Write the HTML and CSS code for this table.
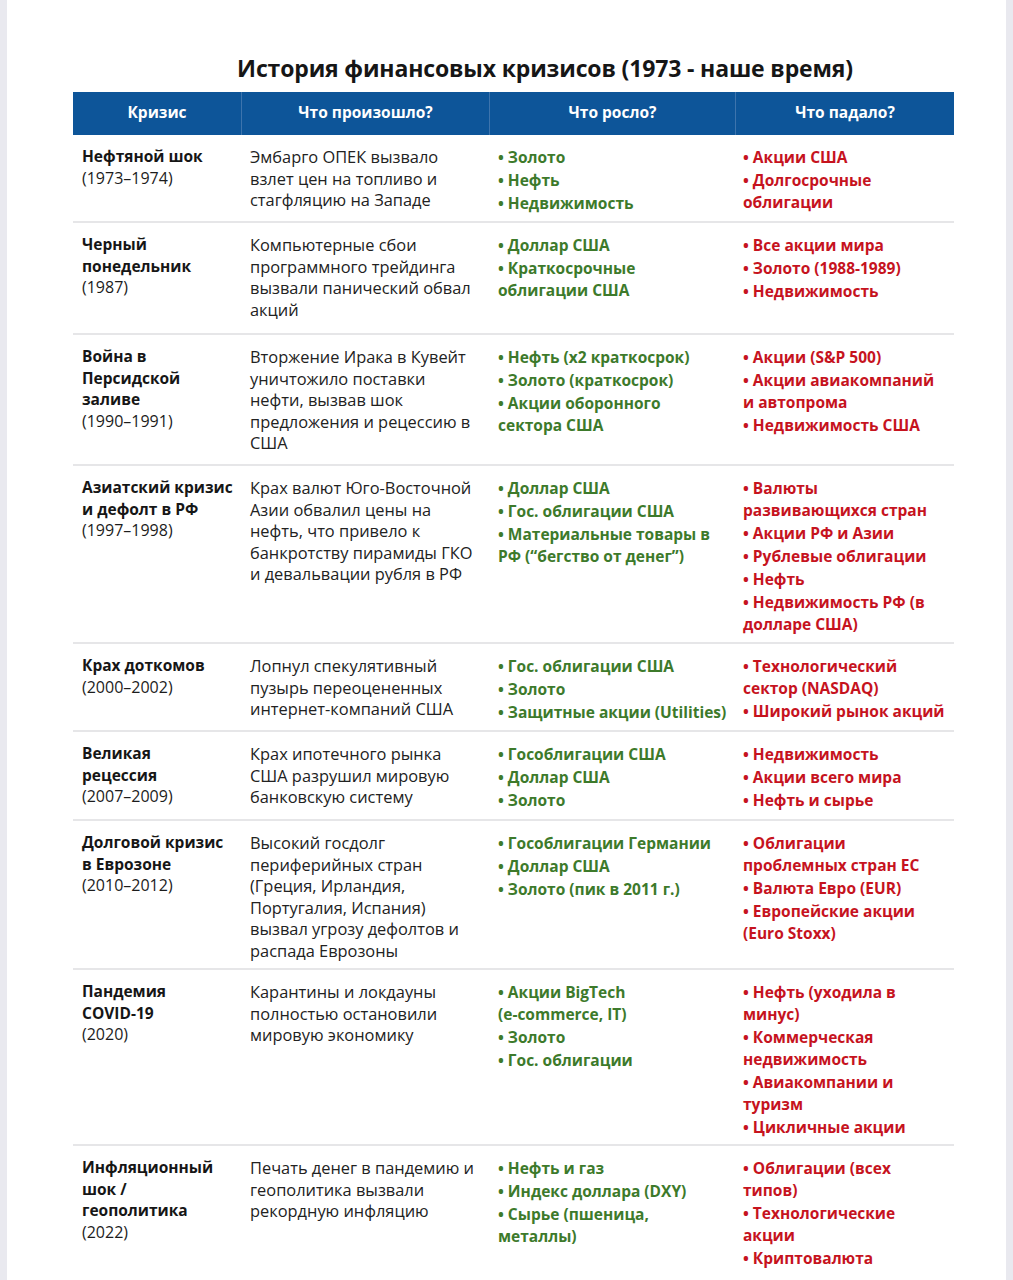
FILE: index.html
```html
<!DOCTYPE html>
<html lang="ru">
<head>
<meta charset="utf-8">
<title>История финансовых кризисов</title>
<link rel="stylesheet" href="styles.css">
</head>
<body>
<div class="page">
  <h1 class="title">История финансовых кризисов (1973 - наше время)</h1>
  <div class="crises">
    <div class="head">
      <div class="th">Кризис</div><div class="th">Что произошло?</div><div class="th">Что росло?</div><div class="th">Что падало?</div>
    </div>
    <div class="row r1">
      <div class="cell name"><b>Нефтяной шок</b><br>(1973–1974)</div>
      <div class="cell desc">Эмбарго ОПЕК вызвало<br>взлет цен на топливо и<br>стагфляцию на Западе</div>
      <div class="cell up"><p>• Золото</p><p>• Нефть</p><p>• Недвижимость</p></div>
      <div class="cell down"><p>• Акции США</p><p>• Долгосрочные<br>облигации</p></div>
    </div>
    <div class="row r2">
      <div class="cell name"><b>Черный<br>понедельник</b><br>(1987)</div>
      <div class="cell desc">Компьютерные сбои<br>программного трейдинга<br>вызвали панический обвал<br>акций</div>
      <div class="cell up"><p>• Доллар США</p><p>• Краткосрочные<br>облигации США</p></div>
      <div class="cell down"><p>• Все акции мира</p><p>• Золото (1988-1989)</p><p>• Недвижимость</p></div>
    </div>
    <div class="row r3">
      <div class="cell name"><b>Война в<br>Персидской<br>заливе</b><br>(1990–1991)</div>
      <div class="cell desc">Вторжение Ирака в Кувейт<br>уничтожило поставки<br>нефти, вызвав шок<br>предложения и рецессию в<br>США</div>
      <div class="cell up"><p>• Нефть (x2 краткосрок)</p><p>• Золото (краткосрок)</p><p>• Акции оборонного<br>сектора США</p></div>
      <div class="cell down"><p>• Акции (S&amp;P 500)</p><p>• Акции авиакомпаний<br>и автопрома</p><p>• Недвижимость США</p></div>
    </div>
    <div class="row r4">
      <div class="cell name"><b>Азиатский кризис<br>и дефолт в РФ</b><br>(1997–1998)</div>
      <div class="cell desc">Крах валют Юго-Восточной<br>Азии обвалил цены на<br>нефть, что привело к<br>банкротству пирамиды ГКО<br>и девальвации рубля в РФ</div>
      <div class="cell up"><p>• Доллар США</p><p>• Гос. облигации США</p><p>• Материальные товары в<br>РФ (“бегство от денег”)</p></div>
      <div class="cell down"><p>• Валюты<br>развивающихся стран</p><p>• Акции РФ и Азии</p><p>• Рублевые облигации</p><p>• Нефть</p><p>• Недвижимость РФ (в<br>долларе США)</p></div>
    </div>
    <div class="row r5">
      <div class="cell name"><b>Крах доткомов</b><br>(2000–2002)</div>
      <div class="cell desc">Лопнул спекулятивный<br>пузырь переоцененных<br>интернет-компаний США</div>
      <div class="cell up"><p>• Гос. облигации США</p><p>• Золото</p><p>• Защитные акции (Utilities)</p></div>
      <div class="cell down"><p>• Технологический<br>сектор (NASDAQ)</p><p>• Широкий рынок акций</p></div>
    </div>
    <div class="row r6">
      <div class="cell name"><b>Великая<br>рецессия</b><br>(2007–2009)</div>
      <div class="cell desc">Крах ипотечного рынка<br>США разрушил мировую<br>банковскую систему</div>
      <div class="cell up"><p>• Гособлигации США</p><p>• Доллар США</p><p>• Золото</p></div>
      <div class="cell down"><p>• Недвижимость</p><p>• Акции всего мира</p><p>• Нефть и сырье</p></div>
    </div>
    <div class="row r7">
      <div class="cell name"><b>Долговой кризис<br>в Еврозоне</b><br>(2010–2012)</div>
      <div class="cell desc">Высокий госдолг<br>периферийных стран<br>(Греция, Ирландия,<br>Португалия, Испания)<br>вызвал угрозу дефолтов и<br>распада Еврозоны</div>
      <div class="cell up"><p>• Гособлигации Германии</p><p>• Доллар США</p><p>• Золото (пик в 2011 г.)</p></div>
      <div class="cell down"><p>• Облигации<br>проблемных стран ЕС</p><p>• Валюта Евро (EUR)</p><p>• Европейские акции<br>(Euro Stoxx)</p></div>
    </div>
    <div class="row r8">
      <div class="cell name"><b>Пандемия<br>COVID-19</b><br>(2020)</div>
      <div class="cell desc">Карантины и локдауны<br>полностью остановили<br>мировую экономику</div>
      <div class="cell up"><p>• Акции BigTech<br>(e-commerce, IT)</p><p>• Золото</p><p>• Гос. облигации</p></div>
      <div class="cell down"><p>• Нефть (уходила в<br>минус)</p><p>• Коммерческая<br>недвижимость</p><p>• Авиакомпании и<br>туризм</p><p>• Цикличные акции</p></div>
    </div>
    <div class="row r9">
      <div class="cell name"><b>Инфляционный<br>шок /<br>геополитика</b><br>(2022)</div>
      <div class="cell desc">Печать денег в пандемию и<br>геополитика вызвали<br>рекордную инфляцию</div>
      <div class="cell up"><p>• Нефть и газ</p><p>• Индекс доллара (DXY)</p><p>• Сырье (пшеница,<br>металлы)</p></div>
      <div class="cell down"><p>• Облигации (всех<br>типов)</p><p>• Технологические<br>акции</p><p>• Криптовалюта</p></div>
    </div>
  </div>
</div>
</body>
</html>
```
FILE: styles.css
```css
html, body {
  margin: 0;
  padding: 0;
  background: #ffffff;
}

body {
  font-family: "Open Sans", "Noto Sans", sans-serif;
  color: #1c1c1c;
}

.page {
  height: 1280px;
  overflow: hidden;
  border-left: 7px solid #e9e9ef;
  border-right: 7px solid #e9e9ef;
  padding-top: 52px;
  box-sizing: border-box;
}

.title {
  margin: 0 0 8px 66px;
  width: 881px;
  padding-left: 63px;
  box-sizing: border-box;
  text-align: center;
  font-size: 23px;
  line-height: 32px;
  letter-spacing: -0.15px;
  font-weight: 700;
  color: #161616;
}

.crises {
  margin-left: 66px;
  width: 881px;
}

.head,
.row {
  display: grid;
  grid-template-columns: 168px 248px 246px 219px;
}

.head {
  height: 43px;
  background: #0d5599;
}

.th {
  display: flex;
  align-items: center;
  justify-content: center;
  padding-bottom: 3px;
  color: #ffffff;
  font-size: 15.5px;
  font-weight: 700;
  border-left: 1px solid #3d74ad;
}

.th:first-child {
  border-left: none;
}

.row {
  box-sizing: border-box;
  border-bottom: 2px solid #e6e6e8;
}

.r1 { height: 88px; }
.r2 { height: 112px; }
.r3 { height: 131px; }
.r4 { height: 178px; }
.r5 { height: 88px; }
.r6 { height: 89px; }
.r7 { height: 149px; }
.r8 { height: 176px; }
.r9 { border-bottom: none; }

.cell {
  padding: 11px 9px 0 9px;
  white-space: nowrap;
  font-size: 16px;
  line-height: 21.6px;
}

.cell:last-child {
  padding-left: 8px;
}

.name b {
  font-size: 15.5px;
  font-weight: 700;
  color: #161616;
}

.desc {
  font-size: 16.4px;
  color: #222222;
}

.up p,
.down p {
  margin: 0 0 1px 0;
  font-size: 15.5px;
  font-weight: 700;
  line-height: 22px;
}

.up {
  color: #3d7a2b;
}

.down {
  color: #c6131e;
}
```
